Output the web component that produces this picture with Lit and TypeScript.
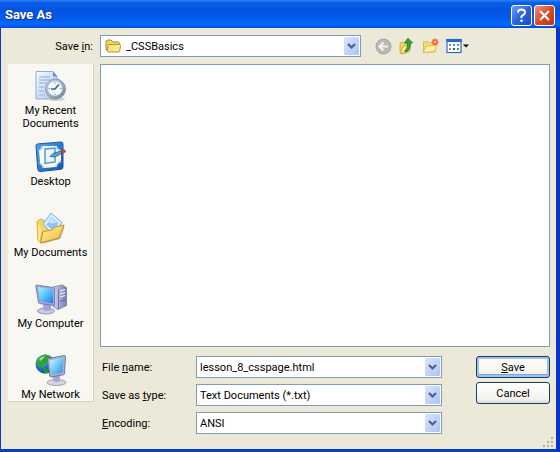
import { LitElement, html, css, svg } from "lit";
import { customElement } from "lit/decorators.js";

const chevron = html`<svg class="arrow" viewBox="0 0 15 18" width="15" height="18" aria-hidden="true">
  <defs>
    <linearGradient id="arrowFill" x1="0" y1="0" x2="1" y2="1">
      <stop offset="0" stop-color="#dbe5fd" /><stop offset=".5" stop-color="#c3d3fb" /><stop offset="1" stop-color="#adc3f5" />
    </linearGradient>
  </defs>
  <rect x="0" y="0" width="15" height="18" rx="1.5" fill="url(#arrowFill)" />
  <path d="M4 7l3.5 3.5L11 7" fill="none" stroke="#4d6185" stroke-width="2.2" />
</svg>`;

const recentIcon = svg`
  <defs>
    <linearGradient id="page" x1="0" y1="0" x2="1" y2="1"><stop offset="0" stop-color="#f6faff"/><stop offset="1" stop-color="#a9c4ef"/></linearGradient>
    <linearGradient id="rim" x1="0" y1="0" x2="1" y2="1"><stop offset="0" stop-color="#d7e3ee"/><stop offset="1" stop-color="#6b7f94"/></linearGradient>
  </defs>
  <path d="M1 1.500h17l4 5v22.500h-21z" fill="url(#page)" stroke="#8eabdc"/>
  <path d="M18 1.500v5h4z" fill="#5f8fd8"/>
  <path d="M4 7h11M4 10h12M4 13h7M4 17h5M4 21h5M4 25h6" stroke="#a8bfe6" stroke-width="1.300"/>
  <ellipse cx="21" cy="29" rx="9" ry="2" fill="#b9bdc6" opacity=".6"/>
  <circle cx="20.500" cy="19" r="10" fill="url(#rim)" stroke="#74889c" stroke-width=".8"/>
  <circle cx="20" cy="18.500" r="7.600" fill="#eff9fd" stroke="#98adbf" stroke-width=".7"/>
  <path d="M20 12v1.500M20 23.500v1.500M13.500 18.500h1.500M25 18.500h1.500" stroke="#78909f"/>
  <path d="M24 14.500l-4 4.500h-4" fill="none" stroke="#2c6b83" stroke-width="1.700"/>`;

const desktopIcon = svg`
  <defs>
    <linearGradient id="desk" x1="0" y1="0" x2="1" y2="1"><stop offset="0" stop-color="#54a5f4"/><stop offset="1" stop-color="#0b55b8"/></linearGradient>
  </defs>
  <path d="M1 4.500Q1 3 3 2.900L26 1q2 0 2 2v23q0 2-2 2.300L5 30.500q-2 0-2.200-2z" fill="url(#desk)" stroke="#1756a5"/>
  <path d="M4 10q3-1 4-5h13q1 4 5 5v11q-4 1-5 5l-12 1q-1-4-4-5z" fill="#fffbd9"/>
  <path d="M3.500 10q3-1 4-5M26 10q-4-1-5-5M4.500 22q3 1 4 5M26 20q-4 1-5 6" fill="none" stroke="#b9dcfa" stroke-width="1.500"/>
  <path d="M10 8l10-1v14l-10 1.500z" fill="#e9f4ff" stroke="#4098e2" stroke-width="1.400"/>
  <path d="M15 15.500l3-3 8-2.500 1.500 2-7.500 4z" fill="#5e9cda" stroke="#28588f" stroke-width=".8"/>
  <path d="M26 10l3-1.200q1.800.5 1.500 2.200l-3.300 1.300z" fill="#db4728" stroke="#a82b18" stroke-width=".6"/>`;

const documentsIcon = svg`
  <defs>
    <linearGradient id="docs" x1="0" y1="0" x2="1" y2="1"><stop offset="0" stop-color="#fff3a3"/><stop offset="1" stop-color="#ecb933"/></linearGradient>
  </defs>
  <path d="M2 9.500l4-2.500 4 2 4 1v18l-8 3-3-3z" fill="#f6d65b" stroke="#c79a2e" stroke-width=".8"/>
  <path d="M16 1L27 10.500 19 24 8 12z" fill="#d8edff" stroke="#79addf"/>
  <path d="M16 5l7.500 6-5 8-7-6z" fill="#8fc2f5"/>
  <path d="M13 10l3-4 3 2.500 3 2-5 1z" fill="#c8e6ff"/>
  <path d="M5.500 31L8 19.500l9-1.500 3-3 9-2-5 13z" fill="url(#docs)" stroke="#bc8b25" stroke-width=".9"/>
  <path d="M2.500 11v17l2.500 2.500 2-12" fill="#ffeb8d" stroke="#d2a73a" stroke-width=".7"/>
  <path d="M8 31l17-4.500 4-12" fill="none" stroke="#77703a" opacity=".5"/>`;

const computerIcon = svg`
  <defs>
    <linearGradient id="screen" x1="0" y1="0" x2="1" y2="1"><stop offset="0" stop-color="#b8efff"/><stop offset=".55" stop-color="#50bcf8"/><stop offset="1" stop-color="#2478db"/></linearGradient>
    <linearGradient id="tower" x1="0" y1="0" x2="1" y2="0"><stop offset="0" stop-color="#d4d7f0"/><stop offset="1" stop-color="#767bb4"/></linearGradient>
  </defs>
  <path d="M18 4l9-2 4.500 2.500v18l-8.500 4-5-3z" fill="url(#tower)" stroke="#7076ad" stroke-width=".8"/>
  <path d="M23.500 6v20" stroke="#5d639d" stroke-width=".8"/>
  <path d="M25 8l5-1.500M25 11l5-1.500M25 14l5-1.500" stroke="#f3f4ff" stroke-width="1.200"/>
  <path d="M25 18.500l5-2" stroke="#595f9a"/>
  <ellipse cx="11" cy="28" rx="8.500" ry="3" fill="#c9cce4" stroke="#8186ad" stroke-width=".8"/>
  <path d="M8 20l8 1v6q-4 2-8 0z" fill="#a1a7d2"/>
  <path d="M1.500 2l17 2.500q1 .2 1 1v17l-15-2q-1-.3-1-1L.8 3q0-1 .7-1z" fill="#9da6d5" stroke="#6972a9" stroke-width=".8"/>
  <path d="M3 4l14.500 2.200 .7 14L5.200 18z" fill="url(#screen)"/>`;

const networkIcon = svg`
  <defs>
    <radialGradient id="globe" cx=".35" cy=".3" r=".8"><stop offset="0" stop-color="#79c9ff"/><stop offset=".5" stop-color="#1e75d4"/><stop offset="1" stop-color="#063a8c"/></radialGradient>
    <linearGradient id="netScreen" x1="0" y1="0" x2="1" y2="1"><stop offset="0" stop-color="#dcf7ff"/><stop offset=".5" stop-color="#6fc8f8"/><stop offset="1" stop-color="#3887dd"/></linearGradient>
  </defs>
  <circle cx="10" cy="10" r="9.500" fill="url(#globe)"/>
  <path d="M2 6q4-5 9-5.500l5 2-3 3 1 3-4 2-2 4-3-2-3-1q-1-3 0-5.500z" fill="#2da33b"/>
  <path d="M4 5q3-3 6-3l-2 3-3 2z" fill="#9ee06f"/>
  <path d="M8 15l4-1 2 5-4 .5z" fill="#269136"/>
  <ellipse cx="21.500" cy="28.500" rx="9.500" ry="3" fill="#d5d5e4" stroke="#8e8eab" stroke-width=".8"/>
  <path d="M18 20l7-1v8q-4 2-7 0z" fill="#a5a8cc"/>
  <path d="M13.500 4.500L29 1.500q1.500 0 1.500 1l-1 17q0 1-1 1.200L16 23q-1 0-1.200-1L12.500 6q0-1.200 1-1.500z" fill="#a9b2ce" stroke="#65719b" stroke-width=".9"/>
  <path d="M14.500 6.500l14-3-.8 15L16.500 21z" fill="url(#netScreen)"/>`;

const places = [
  { lines: ["My Recent", "Documents"], icon: recentIcon },
  { lines: ["Desktop"], icon: desktopIcon },
  { lines: ["My Documents"], icon: documentsIcon },
  { lines: ["My Computer"], icon: computerIcon },
  { lines: ["My Network"], icon: networkIcon },
];

@customElement("app-root")
export class AppRoot extends LitElement {
  static styles = css`
    :host {
      display: block;
      font-family: Roboto, "Liberation Sans", Arial, sans-serif;
      font-size: 11px;
      line-height: 13px;
      color: #000;
    }
    * { box-sizing: border-box; }
    button, input, select { font: inherit; color: inherit; margin: 0; }
    svg { display: block; flex: none; }
    u { text-underline-offset: 1px; }

    .window {
      display: flex;
      flex-direction: column;
      min-height: 100vh;
      background: #ece9d8;
      border: solid #0c3cc0;
      border-width: 0 4px 3px 1px;
      border-right-color: #0a35c4;
      position: relative;
    }
    .title {
      display: flex;
      align-items: center;
      gap: 2px;
      height: 28px;
      padding: 2px 5px 0 5px;
      margin: 0 -4px 0 -1px;
      background: linear-gradient(#2b84f5 0, #0a5ce8 10%, #0453e0 35%, #0458ea 60%, #0566fe 85%, #0560f4 93%, #0345cc 100%);
    }
    .title h1 {
      flex: 1;
      margin: 0;
      font-size: 13px;
      line-height: 16px;
      font-weight: bold;
      color: #fff;
      text-shadow: 1px 1px 1px #0a2f8c;
    }
    .cap {
      width: 21px;
      height: 21px;
      padding: 0;
      border: 1px solid #fff;
      border-radius: 3px;
      background: linear-gradient(135deg, #6f9cf5, #2c62e0 50%, #1b4cc9);
    }
    .close { background: linear-gradient(135deg, #f0957c, #dc4a25 50%, #bf3413); }

    .body {
      flex: 1;
      display: grid;
      grid-template-columns: 86px 1fr;
      grid-template-rows: 22px 1fr;
      gap: 7px 6px;
      padding: 7px 6px 15px 7px;
    }
    .look { align-self: center; justify-self: end; padding-right: 1px; }
    .bar { display: flex; align-items: center; gap: 14px; }
    .combo { position: relative; flex: 1; height: 22px; }
    .bar .combo { flex: 0 1 261px; }
    .combo select, .combo input {
      display: block;
      appearance: none;
      width: 100%;
      height: 100%;
      padding: 0 20px 0 3px;
      border: 1px solid #7f9db9;
      border-radius: 0;
      background: #fff;
      outline: none;
    }
    .combo .folder { position: absolute; left: 5px; top: 3px; pointer-events: none; }
    .bar .combo select { padding-left: 25px; }
    .arrow { position: absolute; right: 2px; top: 2px; pointer-events: none; }
    .drop {
      position: absolute;
      right: 0;
      top: 0;
      width: 19px;
      height: 22px;
      padding: 0;
      border: 0;
      background: none;
    }
    .tools { display: flex; align-items: center; gap: 6px; }
    .tool { padding: 0; border: 0; background: none; }

    .places {
      display: flex;
      flex-direction: column;
      gap: 10px;
      margin-bottom: 32px;
      padding-top: 6px;
      background: #f8f7f2;
      border: solid #d6d2c2;
      border-width: 0 1px 1px 0;
    }
    .place {
      display: flex;
      flex-direction: column;
      align-items: center;
      gap: 2px;
      min-height: 61px;
      padding: 0;
      border: 0;
      background: none;
      white-space: nowrap;
    }
    .place:last-child { min-height: 0; }
    .place span { display: block; }

    .main { display: flex; flex-direction: column; gap: 9px; }
    .list { flex: 1; background: #fff; border: 1px solid #7f9db9; }
    .form { display: flex; gap: 34px; }
    .fields { flex: 1; display: flex; flex-direction: column; gap: 6px; }
    .field { display: flex; align-items: center; }
    .field label { width: 96px; padding-left: 2px; }
    .actions { display: flex; flex-direction: column; gap: 4px; width: 74px; }
    .action {
      height: 22px;
      padding: 0;
      border: 1px solid #123f70;
      border-radius: 3px;
      background: linear-gradient(#fff, #f4f3ee 80%, #dcd8cd);
    }
    .default { box-shadow: inset 0 0 0 2px #a3bff0, inset 0 -1px 0 2px #7d9fe0; }
    .grip { position: absolute; right: 2px; bottom: 1px; }
  `;

  render() {
    return html`
      <div class="window">
        <header class="title">
          <h1>Save As</h1>
          <button class="cap" aria-label="Help">
            <svg viewBox="0 0 19 19" width="19" height="19"><path d="M6 6.500Q6 3.500 9.500 3.500T13 6.500Q13 8 11 9.200T9.500 12" fill="none" stroke="#fff" stroke-width="2"/><circle cx="9.500" cy="14.800" r="1.300" fill="#fff"/></svg>
          </button>
          <button class="cap close" aria-label="Close">
            <svg viewBox="0 0 19 19" width="19" height="19"><path d="M5 5l9 9M14 5l-9 9" stroke="#fff" stroke-width="2.200"/></svg>
          </button>
        </header>
        <div class="body">
          <label class="look" for="folder">Save <u>i</u>n:</label>
          <div class="bar">
            <div class="combo">
              <select id="folder"><option>_CSSBasics</option></select>
              <svg class="folder" viewBox="0 0 17 16" width="17" height="16" aria-hidden="true">
                <path d="M1 4q0-2 2-2h3l2 2h5q1.500 0 1.500 2v7h-11Q1 13 1 11z" fill="#f3d566" stroke="#b08a2a"/>
                <path d="M4 6.500h10.500q1.300 0 1.100 1l-.8 5q-.3 1.500-1.500 1.500H3.500q-1.300 0-1-1.500L3 7.500q.2-1 1-1z" fill="#fbe88f" stroke="#b8922c"/>
              </svg>
              ${chevron}
            </div>
            <div class="tools">
              <button class="tool" aria-label="Back">
                <svg viewBox="0 0 17 17" width="17" height="17"><circle cx="8.500" cy="8.500" r="7.500" fill="#b9b9b5" stroke="#a3a39f"/><path d="M13 8.500H5M8.500 4.500l-4 4 4 4" fill="none" stroke="#f6f5ef" stroke-width="2"/></svg>
              </button>
              <button class="tool" aria-label="Up one level">
                <svg viewBox="0 0 18 18" width="18" height="18"><path d="M2 6l3-1 1.500 1.500L12 5v9l-8 3-2-1z" fill="#f3d65b" stroke="#c9a132" stroke-width=".8"/><path d="M2.500 16.500L5 9.500l8-2-2 7z" fill="#fff1a0" stroke="#cca63a" stroke-width=".8"/><path d="M6.500 14q3.500-2 3.200-8H6.500L10 1.300 14.500 6h-2.300q.3 7-4.200 9z" fill="#35a735" stroke="#14701d" stroke-width=".8"/></svg>
              </button>
              <button class="tool" aria-label="Create new folder">
                <svg viewBox="0 0 18 18" width="18" height="18"><path d="M1.500 15.500V5l4-.5L7 6h6v9z" fill="#f8dc7c" stroke="#d9ae4a" stroke-width=".8"/><path d="M1.500 15.500L4 9l11-1-2.500 6.500z" fill="#fff0a6" stroke="#d9ae4a" stroke-width=".8"/><path d="M13 1.500v7M9.500 5h7M10.500 2.500l5 5M15.500 2.500l-5 5" stroke="#ec5425" stroke-width="1.400"/><circle cx="13" cy="5" r="1.300" fill="#ffd27a"/></svg>
              </button>
              <button class="tool" aria-label="View menu">
                <svg viewBox="0 0 24 16" width="24" height="16"><rect x="1" y="1.500" width="14" height="13" fill="#fff" stroke="#2a6bc6" stroke-width="1.200"/><path d="M.5 1h15v3H.5z" fill="#2468cf"/><path d="M3 6h2v2H3zM11 6h2v2h-2z" fill="#6f93cb"/><path d="M7 6h2v2H7z" fill="#4aa568"/><path d="M3 10h2v2H3z" fill="#b18a54"/><path d="M7 10h2v2H7z" fill="#35548c"/><path d="M11 10h2v2h-2z" fill="#4a9c58"/><path d="M17 6.500h6l-3 3z" fill="#000"/></svg>
              </button>
            </div>
          </div>
          <nav class="places">
            ${places.map(
              (p) => html`<button class="place">
                <svg viewBox="0 0 32 32" width="32" height="32" aria-hidden="true">${p.icon}</svg>
                <span>${p.lines.map((line) => html`<span>${line}</span>`)}</span>
              </button>`
            )}
          </nav>
          <main class="main">
            <div class="list"></div>
            <div class="form">
              <div class="fields">
                <div class="field">
                  <label for="name">File <u>n</u>ame:</label>
                  <div class="combo">
                    <input id="name" type="text" value="lesson_8_csspage.html" />
                    <button class="drop" aria-label="Recent names">${chevron}</button>
                  </div>
                </div>
                <div class="field">
                  <label for="type">Save as <u>t</u>ype:</label>
                  <div class="combo"><select id="type"><option>Text Documents (*.txt)</option></select>${chevron}</div>
                </div>
                <div class="field">
                  <label for="encoding"><u>E</u>ncoding:</label>
                  <div class="combo"><select id="encoding"><option>ANSI</option></select>${chevron}</div>
                </div>
              </div>
              <div class="actions">
                <button class="action default"><u>S</u>ave</button>
                <button class="action">Cancel</button>
              </div>
            </div>
          </main>
        </div>
        <svg class="grip" viewBox="0 0 12 12" width="12" height="12" aria-hidden="true">
          <path d="M9 1h2v2H9zM5 5h2v2H5zM9 5h2v2H9zM1 9h2v2H1zM5 9h2v2H5zM9 9h2v2H9z" fill="#b8b4a2" />
        </svg>
      </div>
    `;
  }
}
